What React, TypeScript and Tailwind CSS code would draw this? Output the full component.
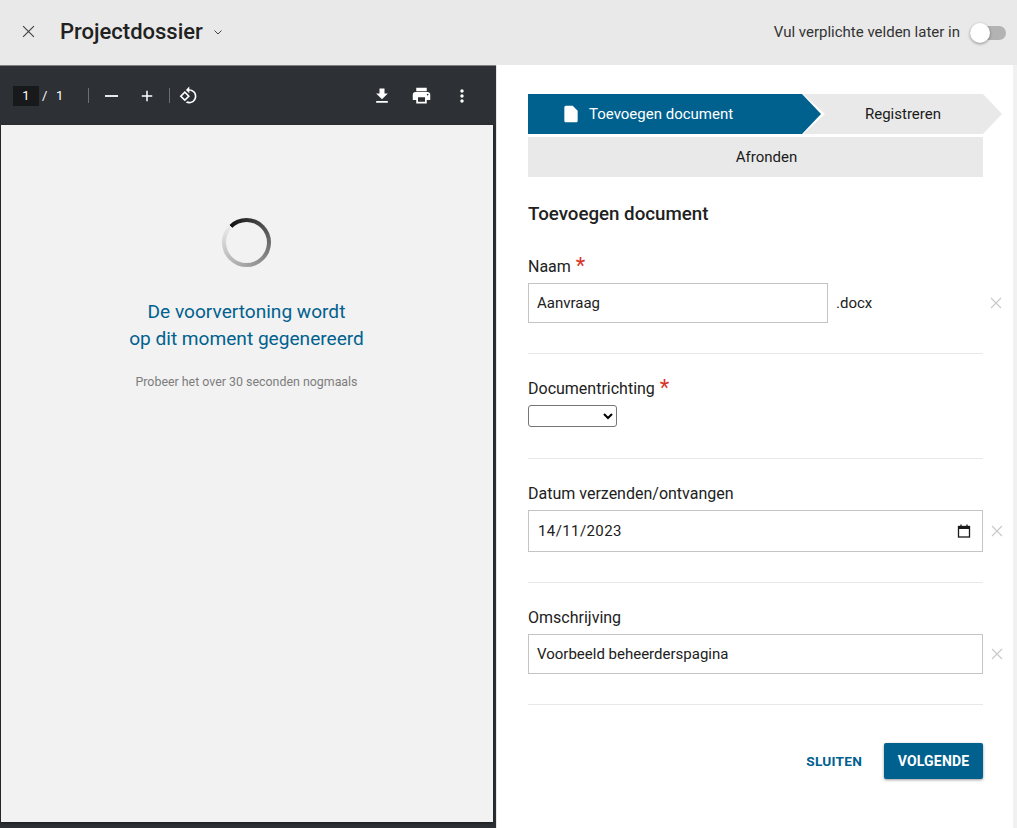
import React from "react";

const font = "font-['Roboto',_'Liberation_Sans',_sans-serif]";

const Cross: React.FC<{ size?: number; className?: string }> = ({ size = 11, className }) => (
    <svg width={size} height={size} viewBox="0 0 12 12" className={className} fill="none" stroke="currentColor" strokeWidth="1.1">
        <path d="M1 1l10 10M11 1L1 11" />
    </svg>
);

const Icon: React.FC<{ d: string; size?: number }> = ({ d, size = 24 }) => (
    <svg width={size} height={size} viewBox="0 0 24 24" fill="currentColor">
        <path d={d} />
    </svg>
);

const Star = () => <span className="text-[#d8352a] text-[22px] leading-none ml-[5px] relative top-[-1px]">*</span>;

const Divider: React.FC<{ className: string }> = ({ className }) => <div className={`h-px bg-[#e8e8e8] w-[455px] ${className}`} />;

const Toolbar = () => (
    <div className="h-[59px] shrink-0 flex items-center text-white text-[13px] bg-[#2d3135]">
        <div className="ml-[13px] w-[26px] h-[20px] bg-[#17191b] flex items-center justify-center">1</div>
        <span className="ml-[3px] w-[6px]">/</span>
        <span className="ml-[8px]">1</span>
        <div className="ml-[25px] w-px h-[15px] bg-[#6b6f72]" />
        <div className="ml-[16px] w-[13px] h-[2px] bg-[#e8e8e8]" />
        <div className="ml-[20px]"><Icon size={18} d="M19 13h-6v6h-2v-6H5v-2h6V5h2v6h6v2z" /></div>
        <div className="ml-[13px] w-px h-[15px] bg-[#6b6f72]" />
        <div className="ml-[9px]"><Icon size={19} d="M7.34 6.41L.86 12.9l6.49 6.48 6.49-6.48-6.5-6.49zM3.69 12.9l3.66-3.66L11 12.9l-3.66 3.66-3.65-3.66zm15.67-6.26C17.61 4.88 15.3 4 13 4V.76L8.76 5 13 9.24V6c1.79 0 3.58.68 4.95 2.05 2.73 2.73 2.73 7.17 0 9.9C16.58 19.32 14.79 20 13 20c-.97 0-1.94-.21-2.84-.61l-1.49 1.49C10.02 21.62 11.51 22 13 22c2.3 0 4.61-.88 6.36-2.64 3.52-3.51 3.52-9.21 0-12.72z" /></div>
        <div className="ml-auto"><Icon size={20} d="M19 9h-4V3H9v6H5l7 7 7-7zM5 18v2h14v-2H5z" /></div>
        <div className="ml-[19px]"><Icon size={21} d="M19 8H5c-1.66 0-3 1.34-3 3v6h4v4h12v-4h4v-6c0-1.66-1.34-3-3-3zm-3 11H8v-5h8v5zm3-7c-.55 0-1-.45-1-1s.45-1 1-1 1 .45 1 1-.45 1-1 1zm-1-9H6v4h12V3z" /></div>
        <div className="ml-[20px] mr-[24px]"><Icon size={20} d="M12 8c1.1 0 2-.9 2-2s-.9-2-2-2-2 .9-2 2 .9 2 2 2zm0 2c-1.1 0-2 .9-2 2s.9 2 2 2 2-.9 2-2-.9-2-2-2zm0 6c-1.1 0-2 .9-2 2s.9 2 2 2 2-.9 2-2-.9-2-2-2z" /></div>
    </div>
);

const Preview = () => (
    <div className="w-[496px] shrink-0 h-full flex flex-col bg-[#2d3135] border-t border-[#7f7f7f]">
        <Toolbar />
        <div className="ml-px w-[492px] h-[697px] bg-[#f2f2f2] flex flex-col items-center shadow-[0_1px_3px_rgba(0,0,0,0.5)]">
            <div className="mt-[93px] mr-px w-[49px] h-[49px] rounded-full bg-[conic-gradient(from_315deg,#111111,#8a8a8a_50%,#ececec)] flex items-center justify-center">
                <div className="w-[41px] h-[41px] rounded-full bg-[#f2f2f2]" />
            </div>
            <div className="mt-[31px] mr-px text-[#00618f] text-[19.1px] leading-[27px] text-center">
                De voorvertoning wordt<br />op dit moment gegenereerd
            </div>
            <div className="mt-[22px] mr-px text-[#7d7d7d] text-[12.4px] leading-[16px]">Probeer het over 30 seconden nogmaals</div>
        </div>
    </div>
);

const Stepper = () => (
    <div className="flex flex-col gap-[3px]">
        <div className="flex">
            <div className="w-[293px] h-[40px] bg-[#00618f] text-white text-[15px] flex items-center pl-[33px] gap-[8px] [clip-path:polygon(0_0,274px_0,293px_50%,274px_100%,0_100%)]">
                <Icon size={20} d="M6 2c-1.1 0-1.99.9-1.99 2L4 20c0 1.1.89 2 1.99 2H18c1.1 0 2-.9 2-2V8l-6-6H6z" />
                <span>Toevoegen document</span>
            </div>
            <div className="w-[199px] h-[40px] ml-[-18px] bg-[#e9e9e9] text-[#1a1a1a] text-[15px] flex items-center justify-center pl-[1px] pt-px [clip-path:polygon(0_0,180px_0,199px_50%,180px_100%,0_100%,22px_50%)]">
                Registreren
            </div>
        </div>
        <div className="w-[455px] h-[40px] bg-[#e9e9e9] text-[#1a1a1a] text-[15px] flex items-center justify-center pl-[22px] pt-px">Afronden</div>
    </div>
);

const Form = () => {
    const box = "border border-[#c4c4c4] bg-white text-[#212121] text-[15px] px-[8px] outline-none";
    const label = "text-[#212121] text-[16px] leading-[18px] flex items-center h-[18px]";
    return (
        <div className="relative">
            <h2 className="mt-[27px] text-[#212121] text-[18.72px] font-medium leading-[20px]">Toevoegen document</h2>

            <div className={`${label} mt-[33px] pt-px`}>Naam<Star /></div>
            <div className="mt-[8px] flex items-center">
                <input defaultValue="Aanvraag" className={`${box} w-[300px] h-[40px]`} />
                <span className="ml-[8px] text-[15px] text-[#212121]">.docx</span>
                <Cross size={12} className="ml-[118px] text-[#c8c8c8]" />
            </div>
            <Divider className="mt-[30px]" />

            <div className={`${label} mt-[25px] pt-px`}>Documentrichting<Star /></div>
            <select className="mt-[8px] block w-[89px] h-[22px] border border-[#767676] rounded-[3px] bg-white text-[13px]" />
            <Divider className="mt-[31px]" />

            <div className={`${label} mt-[25px] pt-px`}>Datum verzenden/ontvangen</div>
            <div className="mt-[8px] flex items-center">
                <div className={`${box} w-[455px] h-[42px] flex items-center justify-between pl-[9px] pr-[11px] tracking-[0.4px]`}>
                    <span>14/11/2023</span>
                    <svg width="14" height="14" viewBox="0 0 14 14" fill="none" className="text-[#1a1a1a]">
                        <rect x="1.5" y="2.5" width="11" height="10.5" stroke="currentColor" strokeWidth="1.3" />
                        <rect x="1" y="2" width="12" height="3" fill="currentColor" />
                        <path d="M4 .5v2M10 .5v2" stroke="currentColor" strokeWidth="1.3" />
                    </svg>
                </div>
                <Cross size={12} className="ml-[8px] text-[#c8c8c8]" />
            </div>
            <Divider className="mt-[30px]" />

            <div className={`${label} mt-[25px] pt-px`}>Omschrijving</div>
            <div className="mt-[8px] flex items-center">
                <input defaultValue="Voorbeeld beheerderspagina" className={`${box} w-[455px] h-[40px]`} />
                <Cross size={12} className="ml-[8px] text-[#c8c8c8]" />
            </div>
            <Divider className="mt-[30px]" />

            <div className="mt-[38px] w-[455px] flex justify-end items-center">
                <button className="text-[#00618f] text-[13.7px] font-bold tracking-[0.2px] mr-[22px]">SLUITEN</button>
                <button className="w-[99px] h-[36px] bg-[#00618f] text-white text-[14px] font-bold tracking-[0.2px] rounded-[2px] shadow-[0_1px_3px_rgba(0,0,0,0.4)]">VOLGENDE</button>
            </div>
        </div>
    );
};

const App: React.FC = () => (
    <div className={`w-[1017px] h-[828px] overflow-hidden bg-white flex flex-col ${font}`}>
        <header className="h-[65px] shrink-0 bg-[#e9e9e9] flex items-center text-[#212121]">
            <Cross size={13} className="ml-[22px] mb-[2px] text-[#444]" />
            <h1 className="ml-[25px] mb-[2px] text-[22px] font-medium">Projectdossier</h1>
            <svg width="10" height="10" viewBox="0 0 10 10" fill="none" stroke="#444" strokeWidth="1" className="ml-[10px] mb-[2px]">
                <path d="M1.5 3.5L5 7l3.5-3.5" />
            </svg>
            <span className="ml-auto text-[15px] text-[#333]">Vul verplichte velden later in</span>
            <div className="relative ml-[10px] mr-[11px] w-[36px] h-[14px] rounded-full bg-[#b3b3b3]">
                <div className="absolute left-0 top-[-3px] w-[20px] h-[20px] rounded-full bg-white shadow-[0_1px_3px_rgba(0,0,0,0.4)]" />
            </div>
        </header>
        <div className="flex flex-1 min-h-0">
            <Preview />
            <div className="w-px bg-[#e4e4e4]" />
            <main className="flex-1 pl-[31px] pt-[29px] border-r-[4px] border-[#f1f1f1]">
                <Stepper />
                <Form />
            </main>
        </div>
    </div>
);

export default App;
